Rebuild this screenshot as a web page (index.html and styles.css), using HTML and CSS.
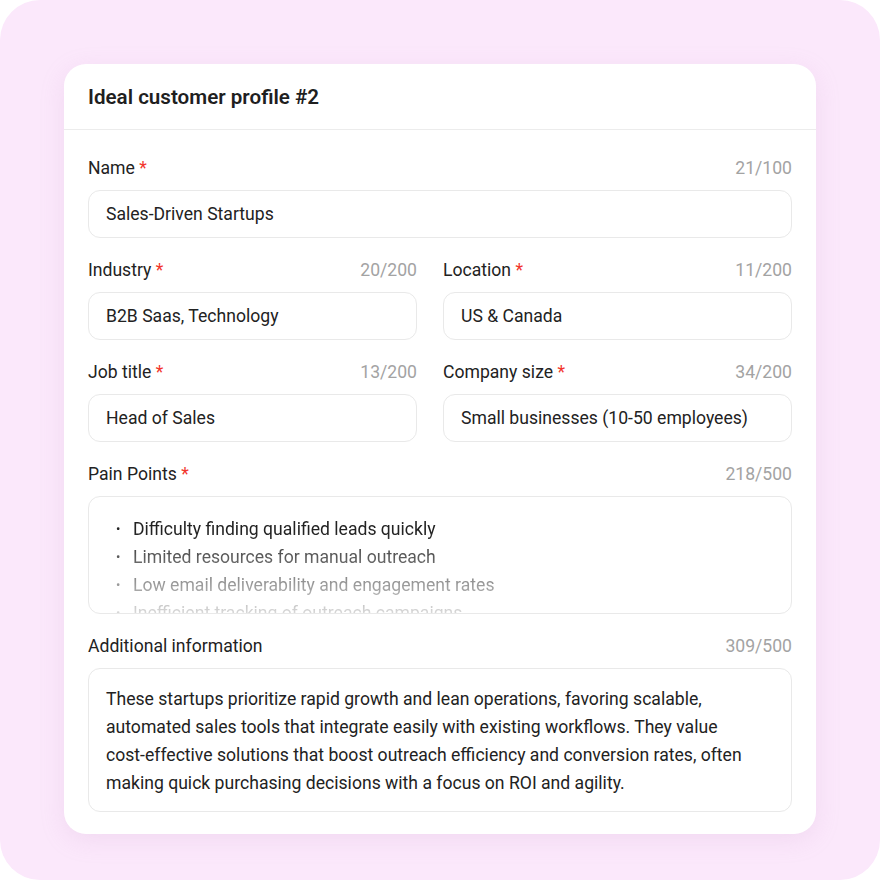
FILE: index.html
```
<!DOCTYPE html>
<html lang="en">
<head>
    <meta charset="UTF-8">
    <meta name="viewport" content="width=device-width, initial-scale=1.0">
    <title>Ideal customer profile</title>
    <link rel="stylesheet" href="styles.css">
</head>
<body>
    <div class="backdrop">
        <div class="card">
            <div class="card-head">Ideal customer profile #2</div>

            <div class="card-body">
                <div class="field">
                    <div class="field-top">
                        <span class="label">Name <span class="req">*</span></span>
                        <span class="count">21/100</span>
                    </div>
                    <div class="input">Sales-Driven Startups</div>
                </div>

                <div class="pair">
                    <div class="field">
                        <div class="field-top">
                            <span class="label">Industry <span class="req">*</span></span>
                            <span class="count">20/200</span>
                        </div>
                        <div class="input">B2B Saas, Technology</div>
                    </div>
                    <div class="field">
                        <div class="field-top">
                            <span class="label">Location <span class="req">*</span></span>
                            <span class="count">11/200</span>
                        </div>
                        <div class="input">US &amp; Canada</div>
                    </div>
                </div>

                <div class="pair">
                    <div class="field">
                        <div class="field-top">
                            <span class="label">Job title <span class="req">*</span></span>
                            <span class="count">13/200</span>
                        </div>
                        <div class="input">Head of Sales</div>
                    </div>
                    <div class="field">
                        <div class="field-top">
                            <span class="label">Company size <span class="req">*</span></span>
                            <span class="count">34/200</span>
                        </div>
                        <div class="input">Small businesses (10-50 employees)</div>
                    </div>
                </div>

                <div class="field">
                    <div class="field-top">
                        <span class="label">Pain Points <span class="req">*</span></span>
                        <span class="count">218/500</span>
                    </div>
                    <div class="area pains">
                        <ul>
                            <li>Difficulty finding qualified leads quickly</li>
                            <li>Limited resources for manual outreach</li>
                            <li>Low email deliverability and engagement rates</li>
                            <li>Inefficient tracking of outreach campaigns</li>
                        </ul>
                    </div>
                </div>

                <div class="field">
                    <div class="field-top">
                        <span class="label">Additional information</span>
                        <span class="count">309/500</span>
                    </div>
                    <div class="area notes">These startups prioritize rapid growth and lean operations, favoring scalable, automated sales tools that integrate easily with existing workflows. They value <span class="nobreak">cost-effective</span> solutions that boost outreach efficiency and conversion rates, often making quick purchasing decisions with a focus on ROI and agility.</div>
                </div>
            </div>
        </div>
    </div>
</body>
</html>
```

FILE: styles.css
```
*{
    box-sizing: border-box;
    margin: 0;
    padding: 0;
}
body{
    font-family: Roboto, "Noto Sans", sans-serif;
    background: white;
    color: #222222;
}
.backdrop{
    width: 880px;
    height: 880px;
    background: #fbe8fb;
    border-radius: 40px;
    padding: 64px;
}
.card{
    background: white;
    border-radius: 22px;
    box-shadow: 0px 6px 24px rgba(200, 150, 200, 0.18);
}
.card-head{
    height: 66px;
    padding: 0px 24px;
    display: flex;
    align-items: center;
    font-size: 20.6px;
    font-weight: 600;
    color: #1f1f1f;
    border-bottom: 1px solid #ececec;
}
.card-body{
    padding: 26px 24px 22px;
    display: flex;
    flex-direction: column;
    gap: 20px;
    font-size: 17.6px;
}
.pair{
    display: grid;
    grid-template-columns: 329fr 349fr;
    gap: 26px;
}
.field-top{
    display: flex;
    justify-content: space-between;
    align-items: center;
    height: 24px;
    margin-bottom: 10px;
}
.req{
    color: #f2362c;
}
.count{
    color: #a3a3a3;
}
.input{
    height: 48px;
    border: 1px solid #e9e9e9;
    border-radius: 12px;
    padding: 0px 17px;
    display: flex;
    align-items: center;
}
.area{
    border: 1px solid #e9e9e9;
    border-radius: 12px;
    line-height: 28px;
}
.pains{
    height: 118px;
    overflow: hidden;
    padding: 18px 17px 0px 27px;
}
.pains ul{
    padding-left: 17px;
    list-style: none;
    -webkit-mask-image: linear-gradient(to bottom, black 15%, rgba(0, 0, 0, 0.25) 80%, rgba(0, 0, 0, 0.05));
    mask-image: linear-gradient(to bottom, black 15%, rgba(0, 0, 0, 0.25) 80%, rgba(0, 0, 0, 0.05));
}
.pains li{
    position: relative;
}
.pains li::before{
    content: "•";
    position: absolute;
    left: -17px;
    font-size: 13px;
}
.notes{
    padding: 16px 17px 14px;
}
.nobreak{
    white-space: nowrap;
}
```
